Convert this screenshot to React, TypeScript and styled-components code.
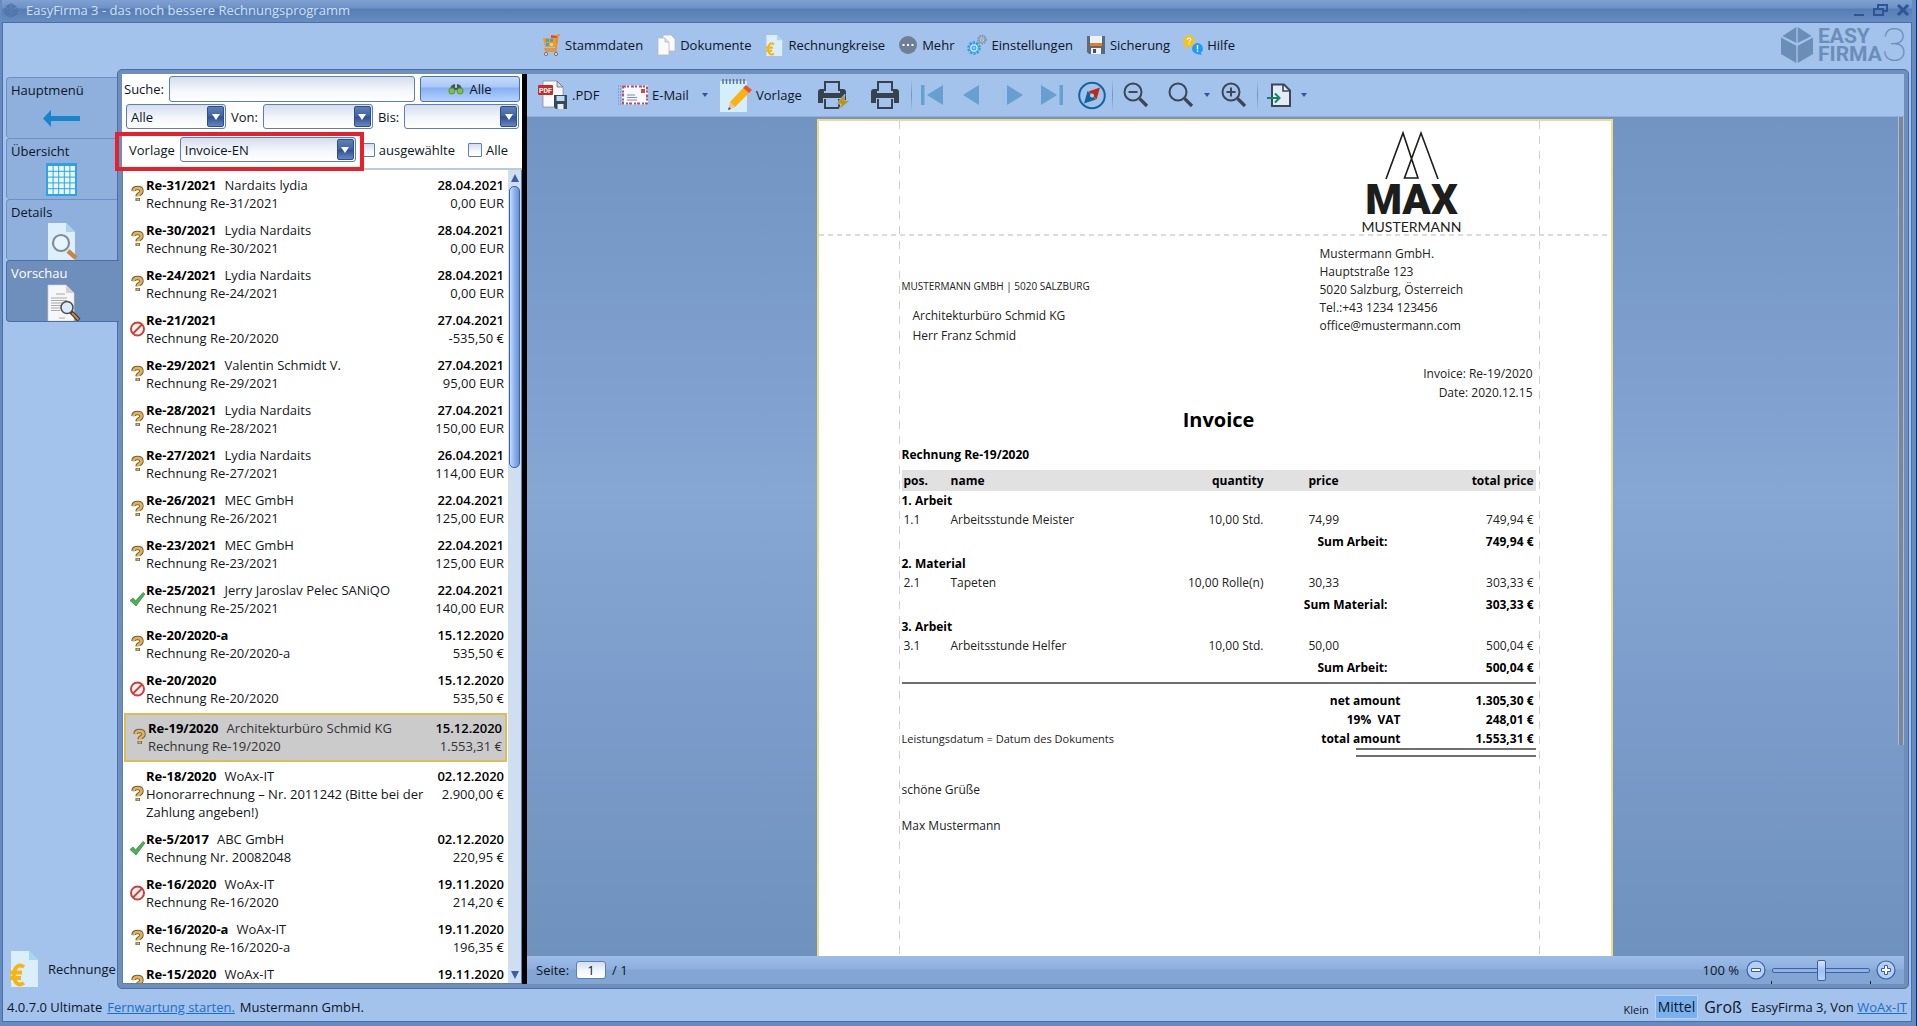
import React from "react";
import styled, { createGlobalStyle, css } from "styled-components";

const font = `"Open Sans", "Noto Sans", "Liberation Sans", sans-serif`;

const Global = createGlobalStyle`
  * { box-sizing: border-box; }
  html, body, #root { height: 100%; }
  body { margin: 0; font-family: ${font}; font-size: 13px; line-height: 18px; color: #0c1626; overflow: hidden; }
  button, input, select { font: inherit; color: inherit; }
  svg { display: block; flex: none; }
  p, h1, h2, ul { margin: 0; padding: 0; }
`;

/* ---------- window frame ---------- */
const Window = styled.div`
  display: flex;
  flex-direction: column;
  height: 100vh;
  padding: 0 4px 4px 2px;
  background: #668bc0;
  border-right: 1px solid #0b2c5f;
`;
const TitleBar = styled.header`
  display: flex;
  align-items: center;
  gap: 8px;
  height: 22px;
  padding: 0 2px 2px 2px;
  color: #cfe0f7;
  background: linear-gradient(#7fa1d1 0, #6d92c7 8px, #587db4 9px, #668cc1 100%);
`;
const Title = styled.h1`
  flex: 1;
  font-size: 13px;
  font-weight: 400;
`;
const WindowButton = styled.button`
  display: flex;
  padding: 0;
  border: 0;
  background: none;
`;
const Client = styled.div`
  flex: 1;
  min-height: 0;
  display: flex;
  flex-direction: column;
  background: #a3c2ec;
  border: 1px solid #4a6ea6;
`;
const MenuBar = styled.nav`
  display: flex;
  align-items: center;
  gap: 13px;
  height: 46px;
  padding: 0 4px 2px 538px;
`;
const MenuButton = styled.button`
  display: flex;
  align-items: center;
  gap: 4px;
  padding: 0;
  border: 0;
  background: none;
  white-space: nowrap;
`;
const Brand = styled.div`
  display: flex;
  align-items: center;
  gap: 5px;
  margin-left: auto;
  color: #6a8eb8;
`;
const BrandName = styled.div`
  font: 700 21px/18px Roboto, sans-serif;
`;
const BrandDigit = styled.div`
  font: 100 46px/36px Roboto, sans-serif;
  margin-left: -5px;
`;

const Middle = styled.div`
  flex: 1;
  min-height: 0;
  display: flex;
  padding-right: 2px;
`;

/* ---------- side tabs ---------- */
const Side = styled.aside`
  flex: none;
  width: 114px;
  display: flex;
  flex-direction: column;
  padding: 8px 0 2px 3px;
`;
const SideTab = styled.button<{ $active?: boolean }>`
  display: flex;
  flex-direction: column;
  height: 61px;
  padding: 1px 0 0 4px;
  text-align: left;
  border: 1px solid #6d8fc2;
  border-right: 0;
  border-bottom: 0;
  border-radius: 4px 0 0 4px;
  background: #8fafdd;
  ${(p) =>
    p.$active &&
    css`
      position: relative;
      height: 62px;
      margin-right: -2px;
      color: #fff;
      background: #6e8ebc;
      border: 1px solid #4a6ea6;
      border-right: 0;
    `}
  svg { margin-left: 32px; }
`;
const SideLabel = styled.span`
  height: 23px;
  line-height: 22px;
`;
const SideCategory = styled.button`
  display: flex;
  align-items: center;
  gap: 9px;
  margin-top: auto;
  padding: 0 0 0 3px;
  border: 0;
  background: none;
  overflow: hidden;
`;

/* ---------- main panel ---------- */
const Panel = styled.main`
  flex: 1;
  min-width: 0;
  display: flex;
  padding: 4px;
  background: #6e8ebc;
  border: 1px solid #4a6ea6;
  border-radius: 5px;
`;
const ListPane = styled.section`
  flex: none;
  width: 400px;
  display: flex;
  flex-direction: column;
  background: #fff;
`;
const Splitter = styled.div`
  flex: none;
  width: 5px;
  background: #000;
`;
const Filters = styled.form`
  position: relative;
  display: flex;
  flex-direction: column;
  gap: 2px;
  padding: 2px 2px 6px 2px;
  border-bottom: 2px solid #bccadf;
`;
const FilterRow = styled.div`
  display: flex;
  align-items: center;
  gap: 5px;
`;
const RangeRow = styled(FilterRow)`
  padding-left: 2px;
`;
const TemplateRow = styled(FilterRow)`
  padding: 6px 12px 0 5px;
`;
const boxStyle = css`
  border: 1px solid #5c7fb5;
  border-radius: 3px;
  background: linear-gradient(#d5ddec, #f3f6fb 55%, #fff);
`;
const SearchBox = styled.input`
  ${boxStyle}
  flex: 1;
  min-width: 0;
  height: 26px;
  padding: 0 4px;
`;
const AllButton = styled.button`
  display: flex;
  align-items: center;
  justify-content: center;
  gap: 5px;
  width: 100px;
  height: 26px;
  padding: 0;
  border: 1px solid #4c72b0;
  border-radius: 3px;
  background: linear-gradient(#c6dbfa 0, #a9c7f6 10px, #86aff1 11px, #b5d3fd 100%);
`;
const SelectShell = styled.span<{ $width: number }>`
  ${boxStyle}
  display: grid;
  width: ${(p) => p.$width}px;
  height: 25px;
  > * { grid-area: 1 / 1; }
`;
const Select = styled.select`
  appearance: none;
  width: 100%;
  padding: 0 20px 0 4px;
  border: 0;
  background: none;
`;
const SelectArrow = styled.span`
  display: flex;
  align-items: center;
  justify-content: center;
  justify-self: end;
  width: 17px;
  margin: 1px;
  border: 1px solid #2f4f8c;
  border-radius: 2px;
  background: linear-gradient(#5c7fb8 0, #44669f 9px, #2f5090 10px, #6487c4 100%);
  pointer-events: none;
`;
const Check = styled.input`
  ${boxStyle}
  appearance: none;
  width: 14px;
  height: 14px;
  margin: 0;
  border-radius: 1px;
`;
const CheckLabel = styled.label`
  display: flex;
  align-items: center;
  gap: 4px;
  &:last-child { margin-left: auto; }
`;
const Highlight = styled.div`
  position: absolute;
  left: -7px;
  bottom: -3px;
  width: 249px;
  height: 39px;
  border: 4px solid #e8202b;
  pointer-events: none;
`;

const ListArea = styled.div`
  flex: 1;
  min-height: 0;
  display: flex;
  border: 1px solid #5f7fae;
  border-top: 0;
`;
const List = styled.ul`
  flex: 1;
  min-width: 0;
  overflow: hidden;
  list-style: none;
  padding: 2px 1px 0;
  color: #14171c;
`;
const Item = styled.li<{ $selected?: boolean }>`
  display: flex;
  align-items: center;
  padding: 4px 3px 5px 5px;
  border: 0 solid #dcbf50;
  ${(p) =>
    p.$selected &&
    css`
      margin: 1px 0;
      border-width: 2px;
      background: #cbcbcb;
      color: #333;
    `}
`;
const ItemText = styled.div`
  flex: 1;
  min-width: 0;
`;
const ItemLine = styled.div`
  display: flex;
  justify-content: space-between;
  gap: 8px;
  min-height: 18px;
`;
const Id = styled.b`
  margin-right: 8px;
  color: #000;
`;
const DateText = styled.time`
  font-weight: 600;
  color: #000;
`;
const Amount = styled.span`
  white-space: nowrap;
`;
const ScrollTrack = styled.div`
  flex: none;
  width: 13px;
  display: flex;
  flex-direction: column;
  align-items: center;
  padding: 4px 0;
  background: #cfdff0;
`;
const ScrollThumb = styled.div`
  width: 11px;
  height: 35%;
  margin: 4px 0 auto;
  border: 1px solid #3f62a0;
  border-radius: 5px;
  background: linear-gradient(90deg, #c5dcfb, #8db2ee 50%, #6c92d2);
`;

/* ---------- preview ---------- */
const Preview = styled.section`
  flex: 1;
  min-width: 0;
  display: flex;
  flex-direction: column;
`;
const Toolbar = styled.div`
  display: flex;
  align-items: center;
  height: 43px;
  padding-left: 2px;
  background: #a3c2ec;
  border-bottom: 1px solid #8eadd9;
`;
const Tool = styled.button<{ $width: number; $text?: boolean }>`
  display: flex;
  align-items: center;
  justify-content: ${(p) => (p.$text ? "flex-start" : "center")};
  gap: 4px;
  width: ${(p) => p.$width}px;
  height: 100%;
  padding: ${(p) => (p.$text ? "0 0 0 9px" : "0")};
  border: 0;
  background: none;
`;
const Separator = styled.span`
  width: 1px;
  height: 32px;
  background: linear-gradient(#a3c2ec, #6f93c8, #a3c2ec);
`;
const Canvas = styled.div`
  flex: 1;
  min-height: 0;
  display: flex;
  overflow: hidden;
  padding: 2px 0 0 4px;
  background: linear-gradient(#7194c2, #86a6d4 45%, #6f91be);
`;
const CanvasScroll = styled.div`
  width: 6px;
  height: 75%;
  margin-top: -2px;
  background: #7c8796;
  border: solid #a9bcd6;
  border-width: 0 1px;
`;
const PageBar = styled.div`
  display: flex;
  align-items: center;
  height: 28px;
  padding: 0 8px 0 9px;
  background: linear-gradient(#9dbde9 0, #8eafdd 13px, #83a5d4 14px);
`;
const PageInput = styled.input`
  ${boxStyle}
  width: 30px;
  height: 18px;
  margin: 0 6px 0 7px;
  padding: 0;
  text-align: center;
`;
const PageLabel = styled.label`
  display: flex;
  align-items: center;
  flex: 1;
`;
const RoundButton = styled.button`
  padding: 0;
  border: 0;
  background: none;
`;
const Slider = styled.input`
  appearance: none;
  width: 98px;
  height: 22px;
  margin: 0 6px;
  background: none;
  &::-webkit-slider-runnable-track {
    height: 5px;
    border: 1px solid #3f62a0;
    border-radius: 2px;
    background: #8fb2e6;
  }
  &::-webkit-slider-thumb {
    appearance: none;
    width: 9px;
    height: 21px;
    margin-top: -9px;
    border: 1px solid #3f5f98;
    border-radius: 2px;
    background: linear-gradient(#d6e6fd, #9dc0f5 50%, #b9d4fb);
  }
`;
const SliderBox = styled.span`
  display: grid;
  > * { grid-area: 1 / 1; }
`;
const Ticks = styled.span`
  align-self: end;
  height: 3px;
  margin: 0 5px -3px;
  border: solid #16243c;
  border-width: 0 1px;
`;
const ZoomValue = styled.output`
  margin-right: 7px;
`;

/* ---------- document ---------- */
const Paper = styled.article`
  position: relative;
  flex: none;
  width: 796px;
  height: 1125px;
  margin: 0 auto;
  border: 2px solid #efdc84;
  background: #fff;
  font-size: 12px;
  line-height: 18px;
  color: #222;
`;
const Guide = styled.div<{ $side: "left" | "right" }>`
  position: absolute;
  top: 0;
  bottom: 0;
  ${(p) => (p.$side === "left" ? "left: 80px" : "right: 71px")};
  width: 1px;
  background: repeating-linear-gradient(#cfcfcf 0 8px, transparent 8px 15px);
`;
const Letterhead = styled.header`
  display: flex;
  justify-content: flex-end;
  height: 115px;
  padding: 9px 149px 0 0;
  background: repeating-linear-gradient(90deg, #dcdcdc 0 5px, transparent 5px 9px) bottom / 100% 2px no-repeat;
`;
const Logo = styled.div`
  display: flex;
  flex-direction: column;
  align-items: center;
  width: 100px;
  color: #1d1d1b;
`;
const LogoBig = styled.strong`
  font: 900 42px/40px Roboto, sans-serif;
`;
const LogoSmall = styled.span`
  font: 400 14px/14px Lato, sans-serif;
`;
const Letter = styled.div`
  padding: 0 75px 0 83px;
`;
const Addresses = styled.div`
  display: flex;
  justify-content: space-between;
`;
const Recipient = styled.address`
  font-style: normal;
  padding-top: 40px;
  line-height: 20px;
`;
const SenderLine = styled.p`
  font-size: 10px;
`;
const RecipientLines = styled.p`
  padding: 10px 0 0 11px;
`;
const Sender = styled.address`
  font-style: normal;
  width: 216px;
  padding-top: 9px;
`;
const Meta = styled.p`
  margin-top: 18px;
  padding-right: 3px;
  line-height: 19px;
  text-align: right;
`;
const DocTitle = styled.h1`
  margin-top: 4px;
  font-size: 20px;
  line-height: 28px;
  text-align: center;
  color: #000;
`;
const DocSubject = styled.h2`
  margin: 11px 0 5px;
  font-size: 12px;
  line-height: 20px;
  color: #000;
`;
const Positions = styled.table`
  width: 100%;
  table-layout: fixed;
  border-collapse: collapse;
  th, td { padding: 0 2px; text-align: left; white-space: nowrap; }
  th { color: #000; }
  thead th { height: 21px; background: #e1e1e1; }
`;
const Cell = styled.td<{ $right?: boolean }>`
  && { text-align: ${(p) => (p.$right ? "right" : "left")}; }
`;
const HeadCell = styled.th<{ $right?: boolean; $indent?: boolean }>`
  && {
    text-align: ${(p) => (p.$right ? "right" : "left")};
    ${(p) => p.$indent && "padding-left: 43px"};
  }
`;
const PriceCell = styled.td`
  && { padding-left: 43px; }
`;
const GroupRow = styled.tr`
  height: 19px;
  && th { padding: 0; }
`;
const PositionRow = styled.tr`
  height: 20px;
`;
const SumRow = styled.tr`
  height: 24px;
  font-weight: 700;
  color: #000;
`;
const DocRule = styled.hr`
  height: 2px;
  margin: 2px 0 7px;
  border: 0;
  background: #707070;
`;
const Closing = styled.div`
  display: flex;
  justify-content: space-between;
  align-items: flex-end;
`;
const ServiceDate = styled.p`
  font-size: 11px;
`;
const Totals = styled.table`
  border-collapse: collapse;
  line-height: 19px;
  font-weight: 700;
  color: #000;
  th { padding: 0; text-align: right; white-space: pre; }
  td { width: 135px; padding: 0 2px; text-align: right; }
`;
const DoubleRule = styled.div`
  width: 180px;
  height: 9px;
  margin-left: auto;
  border: solid #707070;
  border-width: 2px 0;
`;
const Greeting = styled.p`
  margin-top: 24px;
`;
const Signature = styled.p`
  margin-top: 18px;
`;

/* ---------- status bar ---------- */
const StatusBar = styled.footer`
  display: flex;
  align-items: center;
  height: 32px;
  padding: 4px 4px 0;
`;
const Link = styled.a`
  color: #1c6fc9;
  text-decoration: underline;
`;
const StatusGroup = styled.div<{ $gap: number }>`
  display: flex;
  align-items: center;
  gap: ${(p) => p.$gap}px;
  &:last-child { margin-left: auto; }
`;
const SizeButton = styled.button<{ $size: number; $active?: boolean }>`
  height: 24px;
  padding: ${(p) => (p.$size < 14 ? "4px 2px 0" : "0 2px")};
  font-size: ${(p) => p.$size}px;
  line-height: 20px;
  border: 1px solid ${(p) => (p.$active ? "#b7d2f5" : "transparent")};
  background: ${(p) => (p.$active ? "#7bb0ee" : "none")};
`;
const AppName = styled.span`
  margin-left: 3px;
`;

/* ---------- icons ---------- */
const Caret = () => (
  <svg width="8" height="6" viewBox="0 0 8 6"><path d="M1 1h6L4 5z" fill="#3a529c" /></svg>
);
const CubeIcon = ({ w, h, c }: { w: number; h: number; c: string }) => (
  <svg width={w} height={h} viewBox="0 0 32 36" fill={c}>
    <path d="M15.3 0v16L1.5 9zM16.7 0v16L30.5 9zM0 10.5l15.3 8.2V36L0 27zM32 10.5l-15.3 8.2V36L32 27z" />
  </svg>
);
const CartIcon = () => (
  <svg width="20" height="22" viewBox="0 0 20 22">
    <path d="M10 1l7 1-1 7h-6z" fill="#d8532a" />
    <path d="M2 4h14l-1 9H4z" fill="#f59a23" />
    <path d="M5 5h3v3H5zM9 5h3v3H9zM5 9h3v3H5z" fill="#35a7e8" />
    <path d="M9 9h3v3H9z" fill="#ffd04a" />
    <path d="M19 1h-2l-2 14H4l1 2h11" fill="none" stroke="#ef8a1d" strokeWidth="1.4" />
    <circle cx="5" cy="20" r="1.5" fill="#fff" stroke="#666" />
    <circle cx="15" cy="20" r="1.5" fill="#fff" stroke="#666" />
  </svg>
);
const DocsIcon = () => (
  <svg width="20" height="22" viewBox="0 0 20 22" fill="#fafafa" stroke="#b9b9b9" strokeWidth=".8">
    <path d="M7 1h8l4 4v12H7z" />
    <path d="M2 4h7l4 4v13H2z" />
    <path d="M9 4v4h4" fill="#ddd" />
  </svg>
);
const EuroDocIcon = ({ w, h }: { w: number; h: number }) => (
  <svg width={w} height={h} viewBox="0 0 30 36">
    <path d="M2 0h18l9 9v27H2z" fill="#d9effb" />
    <path d="M20 0l9 9h-9z" fill="#a5d6f2" />
    <path d="M15 16c-6-4-10 1-10 8s4 12 10 8M1 21.500h12M1 27h11" fill="none" stroke="#f7b514" strokeWidth="3.8" />
  </svg>
);
const MoreIcon = () => (
  <svg width="20" height="20" viewBox="0 0 20 20">
    <circle cx="10" cy="10" r="9" fill="#6f8096" />
    <path d="M4.500 9h2v2h-2zM9 9h2v2H9zM13.500 9h2v2h-2z" fill="#fff" />
  </svg>
);
const GearsIcon = () => (
  <svg width="20" height="22" viewBox="0 0 20 22" fill="none">
    <circle cx="7" cy="14" r="5.600" stroke="#2f9fe6" strokeWidth="2.400" strokeDasharray="2.200 1.300" />
    <circle cx="7" cy="14" r="4.400" fill="#c9e8fb" stroke="#2f9fe6" />
    <circle cx="7" cy="14" r="2" fill="#a3c2ec" stroke="#2f9fe6" />
    <circle cx="15" cy="5.500" r="4" stroke="#8593a4" strokeWidth="1.800" strokeDasharray="1.600 1" />
    <circle cx="15" cy="5.500" r="2.800" fill="#d5dbe2" stroke="#8593a4" />
    <circle cx="15" cy="5.500" r="1.200" fill="#a3c2ec" stroke="#8593a4" strokeWidth=".7" />
  </svg>
);
const DiskIcon = () => (
  <svg width="20" height="20" viewBox="0 0 20 20">
    <path d="M1 1h18v18H3l-2-2z" fill="#5c6b7c" />
    <path d="M4 1h12v8H4z" fill="#e8f4fb" />
    <path d="M4 8h12v3H4z" fill="#ee7d1a" />
    <path d="M5 13h10v6H5z" fill="#eef0f2" />
    <path d="M7 14h3v4H7z" fill="#46525f" />
  </svg>
);
const HelpIcon = () => (
  <svg width="20" height="20" viewBox="0 0 20 20">
    <path d="M2 9v4l4-2z" fill="#fbbf16" />
    <circle cx="6" cy="6" r="5.800" fill="#fbbf16" />
    <path d="M4.200 4.800c0-2.300 3.800-2.300 3.600 0C7.700 6 6 6 6 7.300M6 8.400v1" stroke="#fff" strokeWidth="1.300" fill="none" />
    <path d="M17 17l2 3-5-1z" fill="#1d9cf0" />
    <circle cx="14.500" cy="13.500" r="5.400" fill="#1d9cf0" />
    <path d="M14.500 10v4.500M14.500 15.500v1.500" stroke="#fff" strokeWidth="1.400" />
  </svg>
);
const ArrowLeftIcon = () => (
  <svg width="38" height="33" viewBox="0 0 38 33">
    <path d="M0 16.500L8 8v6h29v5H8v6z" fill="#1685cc" />
  </svg>
);
const GridIcon = () => (
  <svg width="38" height="33" viewBox="0 0 38 33">
    <path d="M3 0h31v33H3z" fill="#2ea3e3" />
    {[0, 1, 2, 3, 4].map((r) =>
      [0, 1, 2, 3, 4].map((c) => (
        <rect key={`${r}${c}`} x={5 + c * 5.600} y={3 + r * 5.800} width="4.600" height="4.800" fill="#e6f8fe" />
      )),
    )}
  </svg>
);
const DetailsIcon = () => (
  <svg width="38" height="37" viewBox="0 0 38 37">
    <path d="M5 0h18l9 9v28H5z" fill="#dceffb" />
    <path d="M23 0l9 9h-9z" fill="#a6d3f1" />
    <path d="M25 28l8 7" stroke="#c9853f" strokeWidth="4.500" />
    <circle cx="18" cy="20" r="8" fill="#e9f5fd" stroke="#818d9b" strokeWidth="2.200" />
  </svg>
);
const PreviewIcon = () => (
  <svg width="38" height="37" viewBox="0 0 38 37">
    <path d="M5 1h18l8 8v28H5z" fill="#f7f7f7" stroke="#cfcfcf" strokeWidth=".7" />
    <path d="M23 1v8h8z" fill="#d2d2d2" />
    <path d="M13 10h9M8 14h16M8 16.500h16M8 19h12M8 21.500h10M8 24h9M8 26.500h9M16 34h6" stroke="#aaa" />
    <path d="M28 28l8 8" stroke="#3c3025" strokeWidth="4" />
    <path d="M29 29l6.500 6.500" stroke="#c48b4b" strokeWidth="2" />
    <circle cx="24" cy="23.500" r="6" fill="#dcebf8" stroke="#4b5057" strokeWidth="1.600" />
  </svg>
);
const BinocularsIcon = () => (
  <svg width="16" height="12" viewBox="0 0 16 12">
    <path d="M4 2l3-1v4h2V1l3 1 3 5H1z" fill="#44585a" />
    <circle cx="3.800" cy="8" r="3" fill="#7dc243" stroke="#5a8f36" />
    <circle cx="12.200" cy="8" r="3" fill="#7dc243" stroke="#5a8f36" />
  </svg>
);
const PdfIcon = () => (
  <svg width="30" height="30" viewBox="0 0 30 30">
    <path d="M5 1h14l6 6v20H5z" fill="#fafafc" stroke="#8c9099" strokeWidth=".8" />
    <path d="M19 1v6h6z" fill="#d5d8de" stroke="#666b75" strokeWidth=".8" />
    <rect x="0" y="5" width="15" height="10" rx="1" fill="#c62c2c" />
    <text x="7.500" y="12.500" fontSize="7" fontWeight="700" textAnchor="middle" fill="#fff" fontFamily="Roboto, sans-serif">PDF</text>
    <path d="M16 15h13v14H18l-2-2z" fill="#34495e" />
    <path d="M18.500 16h8v5h-8z" fill="#bcdcf2" />
    <path d="M19.500 24h6v5h-6z" fill="#e8edf1" />
  </svg>
);
const MailIcon = () => (
  <svg width="30" height="20" viewBox="0 0 30 20">
    <path d="M0 1h3M0 4h3M0 7h3M0 10h3M0 13h3M0 16h3M0 19h3" stroke="#6a83c4" strokeDasharray="1 1" />
    <rect x="5" y="1.500" width="24" height="17" fill="#f7f8fc" stroke="#f7f8fc" strokeWidth="2" />
    <rect x="5" y="1.500" width="24" height="17" fill="none" stroke="#d6493b" strokeWidth="2" strokeDasharray="3 5" />
    <rect x="5" y="1.500" width="24" height="17" fill="none" stroke="#5c6fae" strokeWidth="2" strokeDasharray="2 6" strokeDashoffset="-4" />
    <path d="M23 4h4v4h-4z" fill="#cf4b3c" />
    <path d="M9 10h8M9 12.500h10M9 15h10" stroke="#7d8cbd" />
  </svg>
);
const NoteIcon = () => (
  <svg width="32" height="33" viewBox="0 0 32 33">
    <path d="M0 2h27v31H0z" fill="#d4effb" />
    <path d="M3 0v5M6.500 0v5M10 0v5M13.500 0v5M17 0v5M20.500 0v5M24 0v5" stroke="#5d7389" strokeWidth="1.500" />
    <path d="M8 31l2-8 5 5z" fill="#efc493" />
    <path d="M8 31l1-3 2 2z" fill="#444" />
    <path d="M10 23L23 9l6 5-14 14z" fill="#fbb116" />
    <path d="M23 9l3-3 6 5-3 3z" fill="#ea5424" />
  </svg>
);
const PrinterIcon = ({ flash }: { flash?: boolean }) => (
  <svg width={flash ? 32 : 28} height="30" viewBox={flash ? "0 0 32 30" : "0 0 28 30"}>
    <path d="M7 11V2h14v9" fill="none" stroke="#36434f" strokeWidth="2" />
    <path d="M3 9h3v4h16V9h3q3 0 3 3v11h-5v-5H5v5H0V12q0-3 3-3z" fill="#36434f" />
    <path d="M7 19v9h14v-9" fill="none" stroke="#36434f" strokeWidth="2" />
    {flash && <path d="M27 14l-9 10h5.500l-3 6L32 20.500h-6z" fill="#bd950a" stroke="#a3c2ec" strokeWidth=".8" />}
  </svg>
);
const NavIcon = ({ kind }: { kind: "first" | "prev" | "next" | "last" }) => (
  <svg width="22" height="20" viewBox="0 0 22 20" fill="#67a0cf">
    {kind === "first" && <path d="M0 0h3.500v20H0zM22 0v20L6 10z" />}
    {kind === "prev" && <path d="M18 0v20L2 10z" />}
    {kind === "next" && <path d="M6 0v20l16-10z" />}
    {kind === "last" && <path d="M0 0v20l16-10zM18.500 0H22v20h-3.500z" />}
  </svg>
);
const CompassIcon = () => (
  <svg width="28" height="29" viewBox="0 0 28 29">
    <circle cx="14" cy="14.500" r="12.800" fill="none" stroke="#12659c" strokeWidth="2" />
    <path d="M22 6.500l-3.500 12-8-8z" fill="#bf2a12" />
    <path d="M6 22.500l3.500-12.500 8.500 8.500z" fill="#12659c" />
    <circle cx="14" cy="14.500" r="2" fill="#b9d1f1" />
  </svg>
);
const LensIcon = ({ sign }: { sign?: "plus" | "minus" }) => (
  <svg width="26" height="26" viewBox="0 0 26 26" fill="none" stroke="#3b4757" strokeWidth="2">
    <circle cx="10" cy="10" r="8.500" />
    <path d="M16.500 16.500L24 24" strokeWidth="3.200" />
    {sign && <path d="M5.500 10h9" />}
    {sign === "plus" && <path d="M10 5.500v9" />}
  </svg>
);
const ExportIcon = () => (
  <svg width="24" height="25" viewBox="0 0 24 25" fill="none">
    <path d="M5 1.500h12l6 6V23H5z" fill="#e3ecf6" stroke="#3b4757" strokeWidth="2" />
    <path d="M16 1.500V8h7" stroke="#3b4757" strokeWidth="1.600" />
    <path d="M0 15h12M8 10.500l4.500 4.500L8 19.500" stroke="#0d8763" strokeWidth="2" />
  </svg>
);
const RoundIcon = ({ plus }: { plus?: boolean }) => (
  <svg width="20" height="20" viewBox="0 0 20 20">
    <circle cx="10" cy="10" r="9" fill="#b3cff6" stroke="#3a5ea0" strokeWidth="1.200" />
    <path d={plus ? "M8.500 5.500h3v3h3v3h-3v3h-3v-3h-3v-3h3z" : "M5.500 8.500h9v3h-9z"} fill="#fff" stroke="#3a5ea0" />
  </svg>
);
const StatusIcon = ({ kind }: { kind: Status }) => (
  <svg width="17" height="18" viewBox="0 0 17 18">
    {kind === "open" && (
      <g fill="none">
        <path d="M4.500 6q0-3 4-3t4 3q0 2-2 3T8.700 11M8.700 13v3" stroke="#5d6168" strokeWidth="4.400" />
        <path d="M4.500 6.500q0-3.500 4-3.500t4 3q0 2-2 3T8.700 11.500M8.700 13.500v2" stroke="#eeb238" strokeWidth="2.600" />
      </g>
    )}
    {kind === "void" && (
      <g fill="#fdf1f0" stroke="#c4433c" strokeWidth="2">
        <circle cx="8.500" cy="9" r="6.500" />
        <path d="M13 4.500L4 13.500" />
      </g>
    )}
    {kind === "paid" && <path d="M1 10.500L4 8l2.500 3L14 2.500l2 1.500L7 16z" fill="#4caf58" stroke="#2f8a43" strokeWidth=".7" />}
  </svg>
);

/* ---------- data ---------- */
type Status = "open" | "void" | "paid";
type Invoice = [Status, string, string, string, string, string];

const invoices: Invoice[] = [
  ["open", "Re-31/2021", "Nardaits lydia", "28.04.2021", "Rechnung Re-31/2021", "0,00 EUR"],
  ["open", "Re-30/2021", "Lydia Nardaits", "28.04.2021", "Rechnung Re-30/2021", "0,00 EUR"],
  ["open", "Re-24/2021", "Lydia Nardaits", "28.04.2021", "Rechnung Re-24/2021", "0,00 EUR"],
  ["void", "Re-21/2021", "", "27.04.2021", "Rechnung Re-20/2020", "-535,50 €"],
  ["open", "Re-29/2021", "Valentin Schmidt V.", "27.04.2021", "Rechnung Re-29/2021", "95,00 EUR"],
  ["open", "Re-28/2021", "Lydia Nardaits", "27.04.2021", "Rechnung Re-28/2021", "150,00 EUR"],
  ["open", "Re-27/2021", "Lydia Nardaits", "26.04.2021", "Rechnung Re-27/2021", "114,00 EUR"],
  ["open", "Re-26/2021", "MEC GmbH", "22.04.2021", "Rechnung Re-26/2021", "125,00 EUR"],
  ["open", "Re-23/2021", "MEC GmbH", "22.04.2021", "Rechnung Re-23/2021", "125,00 EUR"],
  ["paid", "Re-25/2021", "Jerry Jaroslav Pelec SANiQO", "22.04.2021", "Rechnung Re-25/2021", "140,00 EUR"],
  ["open", "Re-20/2020-a", "", "15.12.2020", "Rechnung Re-20/2020-a", "535,50 €"],
  ["void", "Re-20/2020", "", "15.12.2020", "Rechnung Re-20/2020", "535,50 €"],
  ["open", "Re-19/2020", "Architekturbüro Schmid KG", "15.12.2020", "Rechnung Re-19/2020", "1.553,31 €"],
  ["open", "Re-18/2020", "WoAx-IT", "02.12.2020", "Honorarrechnung – Nr. 2011242 (Bitte bei der Zahlung angeben!)", "2.900,00 €"],
  ["paid", "Re-5/2017", "ABC GmbH", "02.12.2020", "Rechnung Nr. 20082048", "220,95 €"],
  ["void", "Re-16/2020", "WoAx-IT", "19.11.2020", "Rechnung Re-16/2020", "214,20 €"],
  ["open", "Re-16/2020-a", "WoAx-IT", "19.11.2020", "Rechnung Re-16/2020-a", "196,35 €"],
  ["open", "Re-15/2020", "WoAx-IT", "19.11.2020", "", ""],
];

const menu: [string, React.ReactNode][] = [
  ["Stammdaten", <CartIcon />],
  ["Dokumente", <DocsIcon />],
  ["Rechnungkreise", <EuroDocIcon w={20} h={21} />],
  ["Mehr", <MoreIcon />],
  ["Einstellungen", <GearsIcon />],
  ["Sicherung", <DiskIcon />],
  ["Hilfe", <HelpIcon />],
];

const groups = [
  { title: "1. Arbeit", pos: "1.1", name: "Arbeitsstunde Meister", qty: "10,00 Std.", price: "74,99", total: "749,94 €", sum: "Sum Arbeit:" },
  { title: "2. Material", pos: "2.1", name: "Tapeten", qty: "10,00 Rolle(n)", price: "30,33", total: "303,33 €", sum: "Sum Material:" },
  { title: "3. Arbeit", pos: "3.1", name: "Arbeitsstunde Helfer", qty: "10,00 Std.", price: "50,00", total: "500,04 €", sum: "Sum Arbeit:" },
];

const Dropdown = ({ id, width, value, label }: { id: string; width: number; value?: string; label?: string }) => (
  <SelectShell $width={width}>
    <Select id={id} aria-label={label}>
      <option>{value ?? ""}</option>
    </Select>
    <SelectArrow>
      <svg width="8" height="6" viewBox="0 0 8 6"><path d="M0 0h8L4 6z" fill="#fff" /></svg>
    </SelectArrow>
  </SelectShell>
);

const InvoiceDocument = () => (
  <Paper>
    <Guide $side="left" />
    <Guide $side="right" />
    <Letterhead>
      <Logo>
        <svg width="54" height="50" viewBox="0 0 54 50" fill="none" stroke="#1d1d1b" strokeWidth="1.600">
          <path d="M1 49L18 3l15 45H19.500L36 3l17 46" />
        </svg>
        <LogoBig>MAX</LogoBig>
        <LogoSmall>MUSTERMANN</LogoSmall>
      </Logo>
    </Letterhead>
    <Letter>
      <Addresses>
        <Recipient>
          <SenderLine>MUSTERMANN GMBH | 5020 SALZBURG</SenderLine>
          <RecipientLines>Architekturbüro Schmid KG<br />Herr Franz Schmid</RecipientLines>
        </Recipient>
        <Sender>
          Mustermann GmbH.<br />Hauptstraße 123<br />5020 Salzburg, Österreich<br />Tel.:+43 1234 123456<br />office@mustermann.com
        </Sender>
      </Addresses>
      <Meta>Invoice: Re-19/2020<br />Date: 2020.12.15</Meta>
      <DocTitle>Invoice</DocTitle>
      <DocSubject>Rechnung Re-19/2020</DocSubject>
      <Positions>
        <colgroup>
          <col width="47" /><col /><col width="116" /><col width="124" /><col width="146" />
        </colgroup>
        <thead>
          <tr>
            <HeadCell>pos.</HeadCell>
            <HeadCell>name</HeadCell>
            <HeadCell $right>quantity</HeadCell>
            <HeadCell $indent>price</HeadCell>
            <HeadCell $right>total price</HeadCell>
          </tr>
        </thead>
        <tbody>
          {groups.map((g) => (
            <React.Fragment key={g.title}>
              <GroupRow><th colSpan={5}>{g.title}</th></GroupRow>
              <PositionRow>
                <Cell>{g.pos}</Cell>
                <Cell>{g.name}</Cell>
                <Cell $right>{g.qty}</Cell>
                <PriceCell>{g.price}</PriceCell>
                <Cell $right>{g.total}</Cell>
              </PositionRow>
              <SumRow>
                <Cell $right colSpan={4}>{g.sum}</Cell>
                <Cell $right>{g.total}</Cell>
              </SumRow>
            </React.Fragment>
          ))}
        </tbody>
      </Positions>
      <DocRule />
      <Closing>
        <ServiceDate>Leistungsdatum = Datum des Dokuments</ServiceDate>
        <Totals>
          <tbody>
            <tr><th>net amount</th><td>1.305,30 €</td></tr>
            <tr><th>19%  VAT</th><td>248,01 €</td></tr>
            <tr><th>total amount</th><td>1.553,31 €</td></tr>
          </tbody>
        </Totals>
      </Closing>
      <DoubleRule />
      <Greeting>schöne Grüße</Greeting>
      <Signature>Max Mustermann</Signature>
    </Letter>
  </Paper>
);

export default function App() {
  return (
    <Window>
      <Global />
      <TitleBar>
        <CubeIcon w={14} h={15} c="#5377ab" />
        <Title>EasyFirma 3 - das noch bessere Rechnungsprogramm</Title>
        <WindowButton aria-label="Minimieren">
          <svg width="12" height="14" viewBox="0 0 12 14"><path d="M1 11h10v2H1z" fill="#2f5597" /></svg>
        </WindowButton>
        <WindowButton aria-label="Wiederherstellen">
          <svg width="15" height="14" viewBox="0 0 15 14" fill="none" stroke="#2f5597" strokeWidth="2">
            <path d="M5 5V2h9v6h-3M1 6h9v6H1z" />
          </svg>
        </WindowButton>
        <WindowButton aria-label="Schließen">
          <svg width="14" height="14" viewBox="0 0 14 14"><path d="M2 2l10 10M12 2L2 12" stroke="#2f5597" strokeWidth="3" /></svg>
        </WindowButton>
      </TitleBar>
      <Client>
        <MenuBar>
          {menu.map(([text, icon]) => (
            <MenuButton key={text}>{icon}{text}</MenuButton>
          ))}
          <Brand>
            <CubeIcon w={32} h={36} c="#6a8eb8" />
            <BrandName>EASY<br />FIRMA</BrandName>
            <BrandDigit>3</BrandDigit>
          </Brand>
        </MenuBar>
        <Middle>
          <Side>
            <SideTab><SideLabel>Hauptmenü</SideLabel><ArrowLeftIcon /></SideTab>
            <SideTab><SideLabel>Übersicht</SideLabel><GridIcon /></SideTab>
            <SideTab><SideLabel>Details</SideLabel><DetailsIcon /></SideTab>
            <SideTab $active><SideLabel>Vorschau</SideLabel><PreviewIcon /></SideTab>
            <SideCategory><EuroDocIcon w={30} h={36} />Rechnunge</SideCategory>
          </Side>
          <Panel>
            <ListPane>
              <Filters>
                <FilterRow>
                  <label htmlFor="search">Suche:</label>
                  <SearchBox id="search" type="text" />
                  <AllButton type="button"><BinocularsIcon />Alle</AllButton>
                </FilterRow>
                <RangeRow>
                  <Dropdown id="kind" width={100} value="Alle" label="Art" />
                  <label htmlFor="from">Von:</label>
                  <Dropdown id="from" width={110} />
                  <label htmlFor="to">Bis:</label>
                  <Dropdown id="to" width={115} />
                </RangeRow>
                <TemplateRow>
                  <label htmlFor="template">Vorlage</label>
                  <Dropdown id="template" width={176} value="Invoice-EN" />
                  <CheckLabel><Check type="checkbox" />ausgewählte</CheckLabel>
                  <CheckLabel><Check type="checkbox" />Alle</CheckLabel>
                </TemplateRow>
                <Highlight />
              </Filters>
              <ListArea>
                <List>
                  {invoices.map(([status, id, name, date, text, amount]) => (
                    <Item key={id} $selected={id === "Re-19/2020"}>
                      <StatusIcon kind={status} />
                      <ItemText>
                        <ItemLine><span><Id>{id}</Id>{name}</span><DateText>{date}</DateText></ItemLine>
                        <ItemLine><span>{text}</span><Amount>{amount}</Amount></ItemLine>
                      </ItemText>
                    </Item>
                  ))}
                </List>
                <ScrollTrack>
                  <svg width="8" height="8" viewBox="0 0 8 8"><path d="M4 0l4 8H0z" fill="#3c5fa3" /></svg>
                  <ScrollThumb />
                  <svg width="8" height="8" viewBox="0 0 8 8"><path d="M0 0h8L4 8z" fill="#3c5fa3" /></svg>
                </ScrollTrack>
              </ListArea>
            </ListPane>
            <Splitter />
            <Preview>
              <Toolbar>
                <Tool $width={80} $text><PdfIcon />.PDF</Tool>
                <Tool $width={90} $text><MailIcon />E-Mail</Tool>
                <Tool $width={12} aria-label="E-Mail Optionen"><Caret /></Tool>
                <Tool $width={98} $text><NoteIcon />Vorlage</Tool>
                <Tool $width={50} aria-label="Schnelldruck"><PrinterIcon flash /></Tool>
                <Tool $width={52} aria-label="Drucken"><PrinterIcon /></Tool>
                <Separator />
                <Tool $width={40} aria-label="Erste Seite"><NavIcon kind="first" /></Tool>
                <Tool $width={40} aria-label="Vorherige Seite"><NavIcon kind="prev" /></Tool>
                <Tool $width={40} aria-label="Nächste Seite"><NavIcon kind="next" /></Tool>
                <Tool $width={40} aria-label="Letzte Seite"><NavIcon kind="last" /></Tool>
                <Tool $width={40} aria-label="Navigation"><CompassIcon /></Tool>
                <Separator />
                <Tool $width={46} aria-label="Verkleinern"><LensIcon sign="minus" /></Tool>
                <Tool $width={44} aria-label="Zoom"><LensIcon /></Tool>
                <Tool $width={8} aria-label="Zoomstufen"><Caret /></Tool>
                <Tool $width={46} aria-label="Vergrößern"><LensIcon sign="plus" /></Tool>
                <Separator />
                <Tool $width={42} aria-label="Exportieren"><ExportIcon /></Tool>
                <Tool $width={8} aria-label="Exportformate"><Caret /></Tool>
              </Toolbar>
              <Canvas>
                <InvoiceDocument />
                <CanvasScroll />
              </Canvas>
              <PageBar>
                <PageLabel>Seite:<PageInput type="text" defaultValue="1" />/ 1</PageLabel>
                <ZoomValue>100 %</ZoomValue>
                <RoundButton aria-label="Kleiner"><RoundIcon /></RoundButton>
                <SliderBox>
                  <Slider type="range" aria-label="Zoom" defaultValue={50} />
                  <Ticks />
                </SliderBox>
                <RoundButton aria-label="Größer"><RoundIcon plus /></RoundButton>
              </PageBar>
            </Preview>
          </Panel>
        </Middle>
        <StatusBar>
          <StatusGroup $gap={5}>
            <span>4.0.7.0 Ultimate</span>
            <Link href="#">Fernwartung starten.</Link>
            <span>Mustermann GmbH.</span>
          </StatusGroup>
          <StatusGroup $gap={3}>
            <SizeButton $size={11}>Klein</SizeButton>
            <SizeButton $size={14} $active>Mittel</SizeButton>
            <SizeButton $size={16}>Groß</SizeButton>
            <AppName>EasyFirma 3, Von <Link href="#">WoAx-IT</Link></AppName>
          </StatusGroup>
        </StatusBar>
      </Client>
    </Window>
  );
}
